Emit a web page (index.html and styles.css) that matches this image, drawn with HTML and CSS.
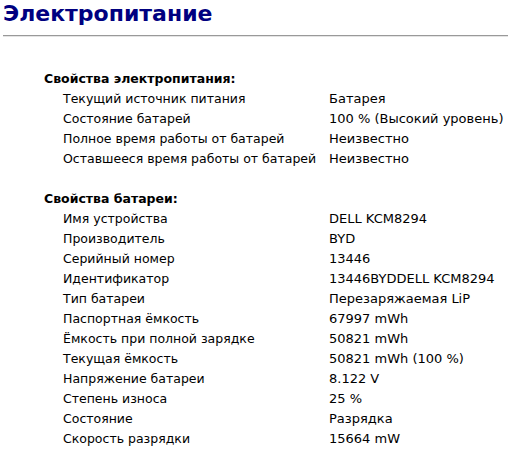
FILE: index.html
```html
<!DOCTYPE html>
<html lang="ru">
<head>
<meta charset="utf-8">
<link rel="stylesheet" href="styles.css">
</head>
<body>
<h1 class="title">Электропитание</h1>
<hr class="rule">
<div class="content">
  <section class="group">
    <div class="group-title">Свойства электропитания:</div>
    <div class="rows">
      <div class="label">Текущий источник питания</div><div class="value">Батарея</div>
      <div class="label">Состояние батарей</div><div class="value">100 % (Высокий уровень)</div>
      <div class="label">Полное время работы от батарей</div><div class="value">Неизвестно</div>
      <div class="label">Оставшееся время работы от батарей</div><div class="value">Неизвестно</div>
    </div>
  </section>
  <section class="group">
    <div class="group-title">Свойства батареи:</div>
    <div class="rows">
      <div class="label">Имя устройства</div><div class="value">DELL KCM8294</div>
      <div class="label">Производитель</div><div class="value">BYD</div>
      <div class="label">Серийный номер</div><div class="value">13446</div>
      <div class="label">Идентификатор</div><div class="value">13446BYDDELL KCM8294</div>
      <div class="label">Тип батареи</div><div class="value">Перезаряжаемая LiP</div>
      <div class="label">Паспортная ёмкость</div><div class="value">67997 mWh</div>
      <div class="label">Ёмкость при полной зарядке</div><div class="value">50821 mWh</div>
      <div class="label">Текущая ёмкость</div><div class="value">50821 mWh (100 %)</div>
      <div class="label">Напряжение батареи</div><div class="value">8.122 V</div>
      <div class="label">Степень износа</div><div class="value">25 %</div>
      <div class="label">Состояние</div><div class="value">Разрядка</div>
      <div class="label">Скорость разрядки</div><div class="value">15664 mW</div>
    </div>
  </section>
</div>
</body>
</html>
```
FILE: styles.css
```css
html, body {
  margin: 0;
  padding: 0;
  background: #ffffff;
}
body {
  padding: 0 2px 0 3px;
  font-family: "DejaVu Sans", Verdana, sans-serif;
  font-size: 12.5px;
  color: #000000;
}
.title {
  margin: 0;
  padding-top: 0;
  font-size: 22px;
  font-weight: bold;
  line-height: 28px;
  color: #000080;
}
.rule {
  margin: 7px 0 0 0;
  border: 0;
  border-top: 1px solid #999999;
  border-bottom: 1px solid #e4e4e4;
  height: 0;
}
.content {
  padding-top: 32px;
  padding-left: 41px;
}
.group {
  margin-bottom: 20px;
}
.group-title {
  font-weight: bold;
  line-height: 20px;
  height: 20px;
}
.rows {
  display: grid;
  grid-template-columns: 266px auto;
  padding-left: 19px;
}
.label, .value {
  line-height: 20px;
  height: 20px;
  white-space: nowrap;
}
.value {
  font-size: 13px;
}
```
